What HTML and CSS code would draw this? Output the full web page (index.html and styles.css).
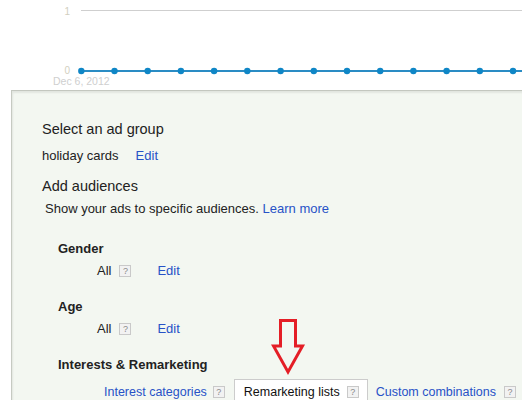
FILE: index.html
```html
<!DOCTYPE html>
<html>
<head>
<meta charset="utf-8">
<link rel="stylesheet" href="styles.css">
</head>
<body>
<div class="chart">
  <svg class="chart-svg" width="522" height="90" viewBox="0 0 522 90">
    <line x1="81" y1="10.5" x2="522" y2="10.5" stroke="#cfcfcf" stroke-width="1"/>
    <text class="axis" x="70" y="14.5" text-anchor="end">1</text>
    <text class="axis" x="70" y="73.5" text-anchor="end">0</text>
    <text class="date" x="53" y="85">Dec 6, 2012</text>
    <line x1="81" y1="71" x2="522" y2="71" stroke="#2a8cc4" stroke-width="2"/>
    <g fill="#0f86c6">
      <circle cx="81.3" cy="71" r="3.2"/>
      <circle cx="114.5" cy="71" r="3.2"/>
      <circle cx="147.7" cy="71" r="3.2"/>
      <circle cx="180.9" cy="71" r="3.2"/>
      <circle cx="214.1" cy="71" r="3.2"/>
      <circle cx="247.3" cy="71" r="3.2"/>
      <circle cx="280.6" cy="71" r="3.2"/>
      <circle cx="313.8" cy="71" r="3.2"/>
      <circle cx="347" cy="71" r="3.2"/>
      <circle cx="380.2" cy="71" r="3.2"/>
      <circle cx="413.4" cy="71" r="3.2"/>
      <circle cx="446.6" cy="71" r="3.2"/>
      <circle cx="479.8" cy="71" r="3.2"/>
      <circle cx="513" cy="71" r="3.2"/>
    </g>
  </svg>
</div>

<div class="panel">
  <div class="heading">Select an ad group</div>
  <div class="line line-group"><span>holiday cards</span><a class="link edit-group" href="#">Edit</a></div>
  <div class="heading heading-aud">Add audiences</div>
  <div class="line line-desc">Show your ads to specific audiences. <a class="link" href="#">Learn more</a></div>

  <div class="sub sub-first">Gender</div>
  <div class="kv"><span>All</span><span class="q q-kv">?</span><a class="link edit-kv" href="#">Edit</a></div>

  <div class="sub">Age</div>
  <div class="kv"><span>All</span><span class="q q-kv">?</span><a class="link edit-kv" href="#">Edit</a></div>

  <div class="sub">Interests &amp; Remarketing</div>
  <div class="tabs">
    <div class="tab"><a class="link" href="#">Interest categories</a><span class="q q-tab">?</span></div>
    <div class="tab tab-active"><span>Remarketing lists</span><span class="q q-tab">?</span></div>
    <div class="tab tab-last"><a class="link" href="#">Custom combinations</a><span class="q q-tab">?</span></div>
  </div>

  <svg class="arrow" width="36" height="60" viewBox="0 0 36 60">
    <polygon points="9.5,2.5 24.5,2.5 24.5,28 31.5,28 17,54 2.5,28 9.5,28" fill="none" stroke="#e41e26" stroke-width="3" stroke-linejoin="miter"/>
  </svg>
</div>
</body>
</html>
```

FILE: styles.css
```css
html, body {
  margin: 0;
  padding: 0;
  background: #ffffff;
  overflow: hidden;
}

body {
  width: 522px;
  height: 400px;
  font-family: "Liberation Sans", Arial, sans-serif;
  color: #222222;
}

.chart {
  height: 90px;
}

.chart-svg {
  display: block;
}

.axis {
  font-family: "Liberation Sans", Arial, sans-serif;
  font-size: 10px;
  fill: #d2cfc0;
}

.date {
  font-family: "Liberation Sans", Arial, sans-serif;
  font-size: 10.5px;
  fill: #cfcfcf;
}

.panel {
  position: relative;
  margin-left: 11px;
  height: 320px;
  padding: 28px 0 0 30px;
  box-sizing: border-box;
  background: #f3f7f1;
  border-top: 1px solid #c3c7bf;
  border-left: 1px solid #c6cac2;
  box-shadow: inset 1px 2px 2px rgba(0, 0, 0, 0.07);
}

.heading {
  font-size: 14.5px;
  line-height: 20px;
  height: 20px;
}

.heading-aud {
  margin-top: 10px;
}

.line {
  font-size: 13px;
  line-height: 20px;
  height: 20px;
}

.line-group {
  display: flex;
  margin-top: 7px;
}

.edit-group {
  margin-left: 17px;
}

.line-desc {
  margin-top: 3px;
  padding-left: 3px;
}

.link {
  color: #2752c7;
  text-decoration: none;
}

.sub {
  font-size: 13px;
  font-weight: bold;
  line-height: 20px;
  height: 20px;
  padding-left: 16px;
  margin-top: 16px;
}

.sub-first {
  margin-top: 20px;
}

.kv {
  display: flex;
  align-items: center;
  font-size: 13px;
  line-height: 20px;
  height: 20px;
  margin-top: 2px;
  padding-left: 55px;
}

.q {
  display: inline-flex;
  align-items: center;
  justify-content: center;
  width: 10px;
  height: 10px;
  border: 1px solid #c9c9c9;
  background: #f2f2f2;
  color: #8a8a8a;
  font-size: 9px;
  line-height: 10px;
  flex: none;
}

.q-kv {
  margin-left: 8px;
}

.edit-kv {
  margin-left: 26px;
}

.tabs {
  display: flex;
  align-items: flex-start;
  margin-top: 4px;
  padding-left: 62px;
  font-size: 12.5px;
  line-height: 20px;
}

.tab {
  display: flex;
  align-items: center;
  height: 20px;
  padding-top: 3px;
  white-space: nowrap;
}

.q-tab {
  margin-left: 6px;
}

.tab-active {
  margin-left: 9px;
  padding: 2px 8px 10px 9px;
  background: #ffffff;
  border: 1px solid #cccccc;
  color: #111111;
}

.tab-active .q-tab {
  margin-left: 7px;
}

.tab-last {
  margin-left: 8px;
}

.tab-last .q-tab {
  margin-left: 8px;
}

.arrow {
  position: absolute;
  left: 259px;
  top: 227px;
}
```
